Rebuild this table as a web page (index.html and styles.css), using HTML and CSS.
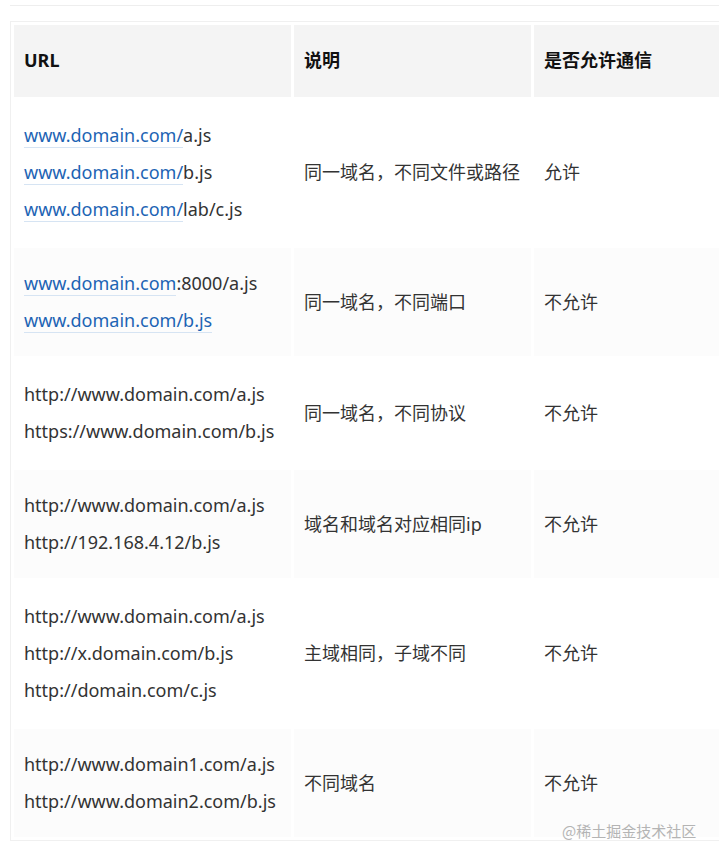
FILE: index.html
```html
<!doctype html>
<html lang="zh-CN">
<head>
	<meta charset="UTF-8">
	<title>同源策略</title>
	<link rel="stylesheet" href="styles.css">
</head>
<body>
	<div class="page">
		<div class="rule"></div>
		<div class="table_wrap">
			<table class="origin_table">
				<colgroup>
					<col class="col_url">
					<col class="col_desc">
					<col class="col_allow">
				</colgroup>
				<thead>
					<tr>
						<th>URL</th>
						<th>说明</th>
						<th>是否允许通信</th>
					</tr>
				</thead>
				<tbody>
					<tr>
						<td>
							<a href="#">www.domain.com/</a>a.js<br>
							<a href="#">www.domain.com/</a>b.js<br>
							<a href="#">www.domain.com/</a>lab/c.js
						</td>
						<td>同一域名，不同文件或路径</td>
						<td>允许</td>
					</tr>
					<tr>
						<td>
							<a href="#">www.domain.com</a>:8000/a.js<br>
							<a href="#">www.domain.com/b.js</a>
						</td>
						<td>同一域名，不同端口</td>
						<td>不允许</td>
					</tr>
					<tr>
						<td>
							http://www.domain.com/a.js<br>
							https://www.domain.com/b.js
						</td>
						<td>同一域名，不同协议</td>
						<td>不允许</td>
					</tr>
					<tr>
						<td>
							http://www.domain.com/a.js<br>
							http://192.168.4.12/b.js
						</td>
						<td>域名和域名对应相同ip</td>
						<td>不允许</td>
					</tr>
					<tr>
						<td>
							http://www.domain.com/a.js<br>
							http://x.domain.com/b.js<br>
							http://domain.com/c.js
						</td>
						<td>主域相同，子域不同</td>
						<td>不允许</td>
					</tr>
					<tr>
						<td>
							http://www.domain1.com/a.js<br>
							http://www.domain2.com/b.js
						</td>
						<td>不同域名</td>
						<td>不允许</td>
					</tr>
				</tbody>
			</table>
			<span class="watermark">@稀土掘金技术社区</span>
		</div>
	</div>
</body>
</html>
```

FILE: styles.css
```css
*{
	margin: 0;
	padding: 0;
	box-sizing: border-box;
}
body{
	background: #fff;
	color: #333;
	font-family: "Noto Sans", "Noto Sans CJK SC", sans-serif;
	font-size: 18px;
	overflow: hidden;
}
.page{
	padding: 5px 0 0 10px;
	width: 719px;
	overflow: hidden;
}
.rule{
	border-top: 1px solid #eee;
	margin-bottom: 15px;
}
.table_wrap{
	position: relative;
	width: 760px;
}
.origin_table{
	table-layout: fixed;
	width: 750px;
	border: 1px solid #f0f0f0;
	border-spacing: 3px;
}
.col_url{
	width: 277px;
}
.col_desc{
	width: 237px;
}
.origin_table th,
.origin_table td{
	text-align: left;
	vertical-align: middle;
	padding: 17px 10px;
	line-height: 37px;
}
.origin_table th{
	background: #f4f4f4;
	font-weight: bold;
	color: #111;
	padding: 17px 10px 18px;
}
.origin_table td{
	white-space: nowrap;
}
.origin_table tbody tr:nth-child(even) td{
	background: #fcfcfc;
}
.origin_table a{
	color: #1d64b4;
	text-decoration: none;
	border-bottom: 1px solid #d6e4f3;
}
.watermark{
	position: absolute;
	left: 552px;
	bottom: 0;
	font-size: 15px;
	line-height: 20px;
	color: #b4b4b4;
	font-family: "Noto Sans CJK SC", sans-serif;
}
```
